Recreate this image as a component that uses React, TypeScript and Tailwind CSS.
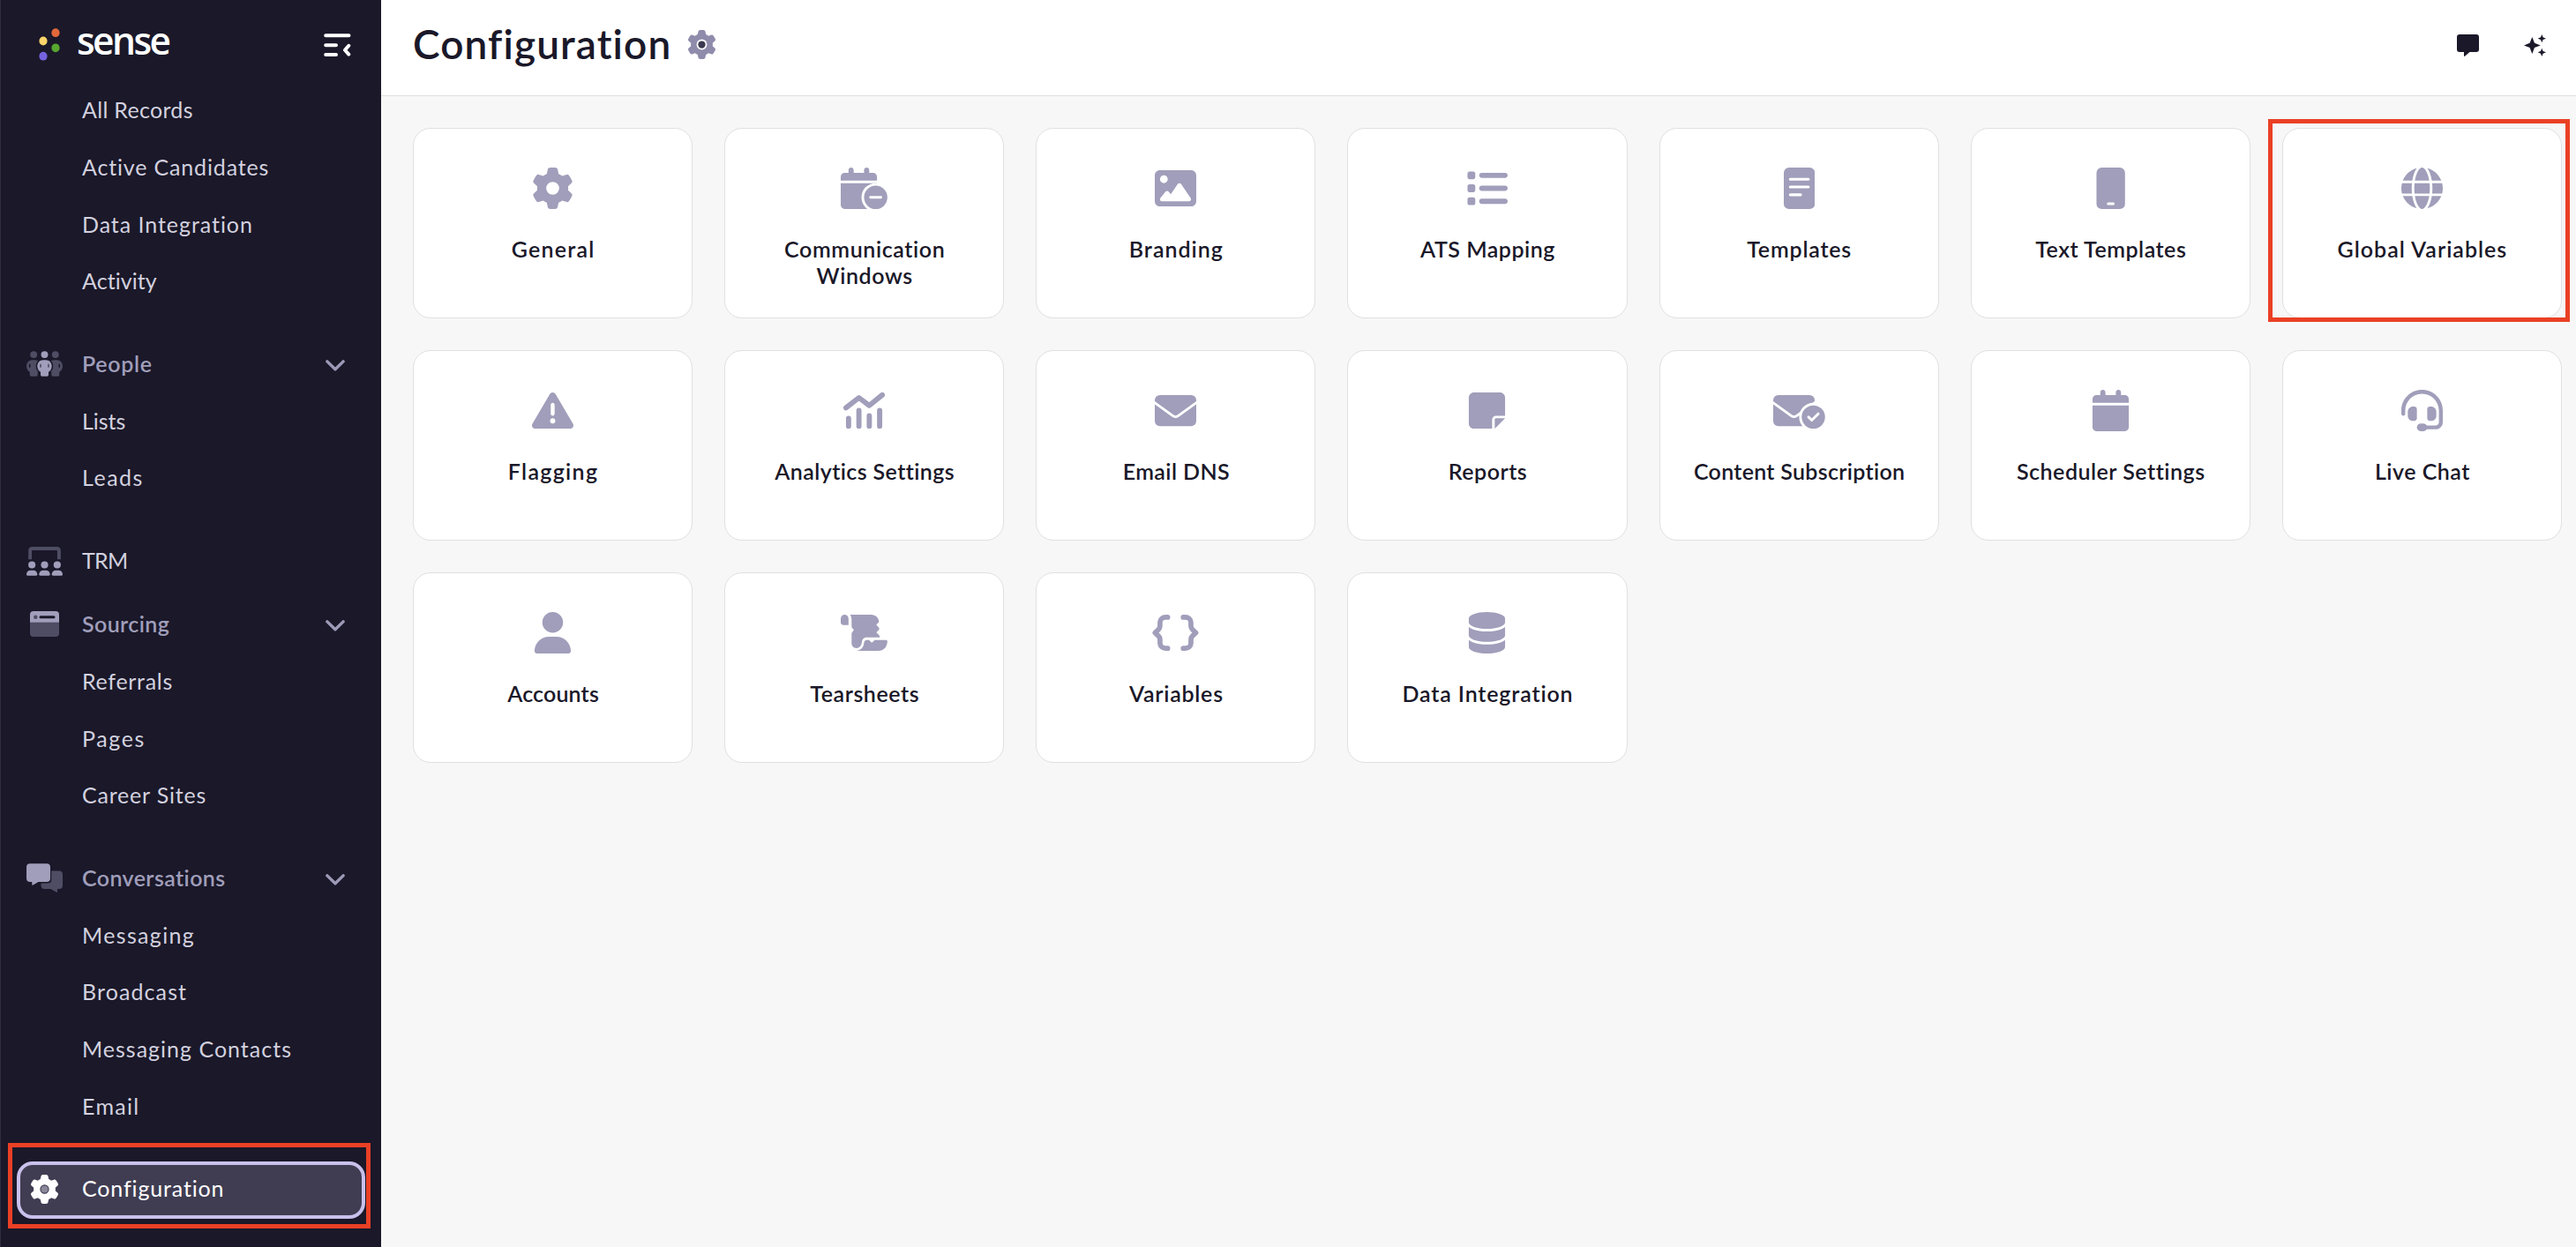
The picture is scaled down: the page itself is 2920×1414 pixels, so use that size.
import type { ReactNode } from "react";
import {
  FaCalendar,
  FaDatabase,
  FaGear,
  FaGlobe,
  FaHeadset,
  FaImage,
  FaList,
  FaNoteSticky,
  FaTriangleExclamation,
  FaUser,
} from "react-icons/fa6";

type NavItem = {
  label: string;
  tracking: string;
};

type Tile = {
  label: string;
  tracking: string;
  icon: ReactNode;
  highlighted?: boolean;
};

const CALENDAR_PATH =
  "M96 32V64H48C21.5 64 0 85.5 0 112v48H448V112c0-26.5-21.5-48-48-48H352V32c0-17.7-14.3-32-32-32s-32 14.3-32 32V64H160V32c0-17.7-14.3-32-32-32S96 14.3 96 32zM448 192H0V464c0 26.5 21.5 48 48 48H400c26.5 0 48-21.5 48-48V192z";

/* ---------- Tile icons ---------- */

function CalendarMinusIcon() {
  return (
    <svg viewBox="0 0 576 512" className="h-[47px]" fill="currentColor">
      <mask id="calendar-cut">
        <rect width="576" height="512" fill="#fff" />
        <circle cx="432" cy="368" r="176" fill="#000" />
      </mask>
      <path d={CALENDAR_PATH} mask="url(#calendar-cut)" />
      <circle cx="432" cy="368" r="144" />
      <rect x="352" y="352" width="160" height="32" rx="16" fill="#fff" />
    </svg>
  );
}

function MemoIcon() {
  return (
    <svg viewBox="0 0 384 512" className="h-[47px]" fill="currentColor">
      <rect width="384" height="512" rx="64" />
      <path
        d="M80 144H304M80 240H304M80 336H208"
        stroke="#fff"
        strokeWidth="34"
        strokeLinecap="round"
      />
    </svg>
  );
}

function MobileIcon() {
  return (
    <svg viewBox="0 0 384 512" className="h-[47px]" fill="currentColor">
      <rect x="16" width="352" height="512" rx="64" />
      <rect x="144" y="430" width="96" height="34" rx="17" fill="#fff" />
    </svg>
  );
}

function ChartIcon() {
  return (
    <svg
      viewBox="0 0 512 512"
      className="h-[47px]"
      fill="none"
      stroke="currentColor"
      strokeWidth="64"
      strokeLinecap="round"
    >
      <path d="M32 222L192 98L320 194L480 64" strokeLinejoin="round" />
      <path d="M64 352V448M192 256V448M320 320V448M448 256V448" />
    </svg>
  );
}

function EnvelopeIcon() {
  return (
    <svg viewBox="0 0 512 512" className="h-[47px]" fill="currentColor">
      <rect y="64" width="512" height="384" rx="64" />
      <path
        d="M-20 147L228 325Q256 342 284 325L532 147"
        fill="none"
        stroke="#fff"
        strokeWidth="32"
      />
    </svg>
  );
}

function EnvelopeCheckIcon() {
  return (
    <svg viewBox="0 0 640 512" className="h-[47px]" fill="currentColor">
      <mask id="envelope-cut">
        <rect width="640" height="512" fill="#fff" />
        <path
          d="M-20 147L228 325Q256 342 284 325L532 147"
          fill="none"
          stroke="#000"
          strokeWidth="32"
        />
        <circle cx="496" cy="336" r="176" fill="#000" />
      </mask>
      <rect y="64" width="512" height="384" rx="64" mask="url(#envelope-cut)" />
      <circle cx="496" cy="336" r="144" />
      <path
        d="M436 336L476 376L556 296"
        fill="none"
        stroke="#fff"
        strokeWidth="32"
        strokeLinecap="round"
        strokeLinejoin="round"
      />
    </svg>
  );
}

function ScrollIcon() {
  return (
    <svg viewBox="0 0 576 512" className="h-[47px]" fill="currentColor">
      <path d="M0 80C0 54 21 32 48 32S96 54 96 80V160H32C14 160 0 146 0 128Z" />
      <path d="M116 32H376C432 32 472 74 472 124L444 150Q438 158 446 166L472 192Q482 205 472 219L446 244Q438 252 446 260L474 286Q484 298 480 314H320C284 314 266 340 262 366C258 412 234 446 196 446C158 446 134 418 134 384V276C134 258 144 242 158 230Q164 222 158 214C142 202 134 190 134 172V96C134 72 128 50 116 32Z" />
      <path d="M194 478C258 468 284 430 288 378C290 358 304 346 322 346H350L376 373Q384 380 392 373L418 346H560Q576 346 576 362C574 430 530 480 464 480H194Z" />
    </svg>
  );
}

function BracesIcon() {
  return (
    <svg
      viewBox="0 0 576 512"
      className="h-[47px]"
      fill="none"
      stroke="currentColor"
      strokeWidth="62"
      strokeLinecap="round"
      strokeLinejoin="round"
    >
      <path d="M192 64H168C128 64 97 93 97 128V172C97 189 90 205 78 216L36 256L78 296C90 307 97 323 97 340V384C97 419 128 448 168 448H192" />
      <path d="M384 64H408C448 64 479 93 479 128V172C479 189 486 205 498 216L540 256L498 296C486 307 479 323 479 340V384C479 419 448 448 408 448H384" />
    </svg>
  );
}

/* ---------- Sidebar icons ---------- */

function PeopleIcon() {
  const body =
    "M16 0H24C33 0 40 7 40 17C40 24 36 30 31 33V41Q31 45 27 45H13Q9 45 9 41V33C4 30 0 24 0 17C0 7 7 0 16 0Z";
  return (
    <svg viewBox="0 0 640 448" className="w-[41px]" fill="#4e4d63">
      <circle cx="128" cy="64" r="62" />
      <circle cx="512" cy="64" r="62" />
      <path d={body} transform="translate(0 160) scale(6.4)" />
      <path d={body} transform="translate(384 160) scale(6.4)" />
      <g fill="#1a1829">
        <ellipse cx="58" cy="262" rx="14" ry="34" />
        <ellipse cx="582" cy="262" rx="14" ry="34" />
        <path d={body} transform="translate(168 142) scale(7.6 7.4)" />
      </g>
      <g fill="#a09eba">
        <circle cx="320" cy="64" r="62" />
        <path d={body} transform="translate(192 160) scale(6.4)" />
      </g>
      <g fill="#4e4d63">
        <ellipse cx="250" cy="262" rx="14" ry="34" />
        <ellipse cx="390" cy="262" rx="14" ry="34" />
      </g>
    </svg>
  );
}

function AudienceIcon() {
  return (
    <svg viewBox="0 0 640 512" className="w-[41px]" fill="#a09eba">
      <path
        d="M64 224V72Q64 32 104 32H536Q576 32 576 72V224"
        fill="none"
        stroke="#4e4d63"
        strokeWidth="62"
      />
      {[96, 320, 544].map((cx) => (
        <g key={cx}>
          <circle cx={cx} cy="320" r="84" fill="#1a1829" />
          <circle cx={cx} cy="320" r="64" />
          <path
            d="M-96 486C-96 446 -66 416 -26 416H26C66 416 96 446 96 486Q96 512 70 512H-70Q-96 512 -96 486Z"
            transform={`translate(${cx})`}
          />
        </g>
      ))}
    </svg>
  );
}

function BrowserIcon() {
  return (
    <svg viewBox="0 0 33 29" className="w-[33px]">
      <path d="M0 12.5H33V25Q33 29 29 29H4Q0 29 0 25Z" fill="#4e4d63" />
      <path d="M4 0H29Q33 0 33 4V12.7H0V4Q0 0 4 0Z" fill="#a09eba" />
      <circle cx="6.3" cy="6.8" r="2.2" fill="#4e4d63" />
      <path d="M12 6.8H27" stroke="#1a1829" strokeWidth="3" strokeLinecap="round" />
    </svg>
  );
}

function ChatsIcon() {
  return (
    <svg viewBox="0 0 41 33" className="w-[41px]">
      <path
        d="M21 8.5H37Q41 8.5 41 12.5V25Q41 29 37 29H35V32Q35 33.4 33.6 32.6L27.5 29H20.5Q16.5 29 16.5 25V17Z"
        fill="#4e4d63"
      />
      <path d="M5 0H24Q28.2 0 28.2 4V19Q28.2 22.5 24 22.5H14L7 26.5V22.5Z" fill="#1a1829" />
      <path
        d="M4 .3H23Q27 .3 27 4.3V17Q27 21 23 21H13.5L7.5 24.6Q6.3 25.2 6.3 24V21H4Q0 21 0 17V4.3Q0 .3 4 .3Z"
        fill="#a09eba"
      />
    </svg>
  );
}

function ChevronDown() {
  return (
    <svg
      viewBox="0 0 22 13"
      className="mt-1 ml-auto mr-[41px] w-[22px]"
      fill="none"
      stroke="#9d9ab8"
      strokeWidth="3.4"
      strokeLinecap="round"
      strokeLinejoin="round"
    >
      <path d="M1.9 1.9L11 10.8L20.1 1.9" />
    </svg>
  );
}

function SidebarCollapseIcon() {
  return (
    <svg
      viewBox="0 0 31 26"
      className="w-[31px]"
      fill="none"
      stroke="#fff"
      strokeWidth="4"
      strokeLinecap="round"
      strokeLinejoin="round"
    >
      <path d="M2.2 2.2H28.5M2.2 13.2H14M2.2 24H14" />
      <path d="M28.3 13.8L24 18.7L28.3 23.6" />
    </svg>
  );
}

function SenseLogo() {
  return (
    <div className="flex items-center">
      <svg viewBox="0 0 24 38" className="w-6">
        <ellipse cx="19" cy="5.2" rx="4.6" ry="4.9" fill="#e2683b" />
        <ellipse cx="5" cy="14.5" rx="4.6" ry="4.9" fill="#fcd46a" />
        <ellipse cx="19" cy="22.3" rx="4.6" ry="4.9" fill="#58a52f" />
        <ellipse cx="5" cy="31.7" rx="4.6" ry="4.9" fill="#7463de" />
      </svg>
      <span className="ml-[19px] -mt-[11px] font-['Open_Sans'] text-[42.5px] leading-[44px] font-semibold tracking-[-2.6px] text-white">
        sense
      </span>
    </div>
  );
}

/* ---------- Sidebar ---------- */

function SubItem({ label, tracking }: NavItem) {
  return (
    <a className={`flex h-[64.7px] items-center pb-[2px] pl-[92px] text-[#d3d1df] ${tracking}`}>
      {label}
    </a>
  );
}

function GroupHeader({ label, tracking, icon }: NavItem & { icon: ReactNode }) {
  return (
    <div className={`flex h-[64.7px] items-center pb-px font-semibold text-[#a09eba] ${tracking}`}>
      <span className="ml-[29px] mr-[22px] flex w-[41px] justify-center">{icon}</span>
      <span className="-mt-px">{label}</span>
      <ChevronDown />
    </div>
  );
}

const records: NavItem[] = [
  { label: "All Records", tracking: "tracking-[0.3px]" },
  { label: "Active Candidates", tracking: "tracking-[0.84px]" },
  { label: "Data Integration", tracking: "tracking-[0.95px]" },
  { label: "Activity", tracking: "tracking-[0.05px]" },
];

const people: NavItem[] = [
  { label: "Lists", tracking: "tracking-[-0.03px]" },
  { label: "Leads", tracking: "tracking-[1.5px]" },
];

const sourcing: NavItem[] = [
  { label: "Referrals", tracking: "tracking-[0.7px]" },
  { label: "Pages", tracking: "tracking-[1.6px]" },
  { label: "Career Sites", tracking: "tracking-[0.8px]" },
];

const conversations: NavItem[] = [
  { label: "Messaging", tracking: "tracking-[1.35px]" },
  { label: "Broadcast", tracking: "tracking-[1.1px]" },
  { label: "Messaging Contacts", tracking: "tracking-[1px]" },
  { label: "Email", tracking: "tracking-[1.3px]" },
];

function Sidebar() {
  return (
    <aside className="h-full w-[432px] shrink-0 border-l border-[#2f2d40] bg-[#1a1829]">
      <div className="flex h-[93px] items-start justify-between pl-[43px] pr-[34px] pt-8">
        <SenseLogo />
        <div className="pt-[6px]">
          <SidebarCollapseIcon />
        </div>
      </div>

      <nav className="text-[25px] leading-[30px]">
        {records.map((item) => (
          <SubItem key={item.label} {...item} />
        ))}

        <div className="mt-[29px]">
          <GroupHeader label="People" tracking="tracking-[0.7px]" icon={<PeopleIcon />} />
          {people.map((item) => (
            <SubItem key={item.label} {...item} />
          ))}
        </div>

        <div className="mt-[29px] flex h-[64.7px] items-center tracking-[-0.7px] text-[#d3d1df]">
          <span className="ml-[29px] mr-[22px] w-[41px]">
            <AudienceIcon />
          </span>
          <span className="-mt-[2px]">TRM</span>
        </div>

        <div className="mt-[7.5px]">
          <GroupHeader label="Sourcing" tracking="tracking-[0.4px]" icon={<BrowserIcon />} />
          {sourcing.map((item) => (
            <SubItem key={item.label} {...item} />
          ))}
        </div>

        <div className="mt-[29px]">
          <GroupHeader label="Conversations" tracking="tracking-[0.4px]" icon={<ChatsIcon />} />
          {conversations.map((item) => (
            <SubItem key={item.label} {...item} />
          ))}
        </div>

        <a className="relative ml-[18px] mt-[29.6px] flex h-[65px] w-[395px] items-center rounded-[18px] border-4 border-[#c9c0ec] bg-[#403d52] pb-[2px] tracking-[0.85px] text-white">
          <svg viewBox="0 0 512 512" className="ml-[11px] mr-[26px] w-[33px] overflow-visible">
            <FaGear size={512} color="#fff" />
            <circle cx="256" cy="256" r="62" fill="#8a8799" />
          </svg>
          <span className="-mt-[3px]">Configuration</span>
          <span className="absolute -left-[14px] -top-[25px] h-[97px] w-[411px] border-[5px] border-[#ea4025]" />
        </a>
      </nav>
    </aside>
  );
}

/* ---------- Main area ---------- */

const tiles: Tile[] = [
  { label: "General", tracking: "tracking-[1.2px]", icon: <FaGear size={47} /> },
  { label: "Communication Windows", tracking: "tracking-[0.6px]", icon: <CalendarMinusIcon /> },
  { label: "Branding", tracking: "tracking-[1px]", icon: <FaImage size={47} /> },
  { label: "ATS Mapping", tracking: "tracking-[0.5px]", icon: <FaList size={47} /> },
  { label: "Templates", tracking: "tracking-[0.8px]", icon: <MemoIcon /> },
  { label: "Text Templates", tracking: "tracking-[0.5px]", icon: <MobileIcon /> },
  { label: "Global Variables", tracking: "tracking-[1px]", icon: <FaGlobe size={47} />, highlighted: true },
  { label: "Flagging", tracking: "tracking-[1.3px]", icon: <FaTriangleExclamation size={47} /> },
  { label: "Analytics Settings", tracking: "tracking-[0.4px]", icon: <ChartIcon /> },
  { label: "Email DNS", tracking: "tracking-[0.4px]", icon: <EnvelopeIcon /> },
  { label: "Reports", tracking: "tracking-[0.5px]", icon: <FaNoteSticky size={47} /> },
  { label: "Content Subscription", tracking: "tracking-[0.3px]", icon: <EnvelopeCheckIcon /> },
  { label: "Scheduler Settings", tracking: "tracking-[0.5px]", icon: <FaCalendar size={47} /> },
  { label: "Live Chat", tracking: "tracking-[0.5px]", icon: <FaHeadset size={47} /> },
  { label: "Accounts", tracking: "tracking-[0.15px]", icon: <FaUser size={47} /> },
  { label: "Tearsheets", tracking: "tracking-[0.55px]", icon: <ScrollIcon /> },
  { label: "Variables", tracking: "tracking-[0.75px]", icon: <BracesIcon /> },
  { label: "Data Integration", tracking: "tracking-[0.85px]", icon: <FaDatabase size={47} /> },
];

function ConfigTile({ label, tracking, icon, highlighted }: Tile) {
  return (
    <div className="relative flex h-[216px] flex-col items-center rounded-[20px] border border-[#e0e0e2] bg-white px-7 pt-11 text-[#a09eba]">
      {icon}
      <p
        className={`mt-[30px] max-w-[250px] pl-px text-center text-[25px] leading-[30px] font-semibold text-[#1a1829] ${tracking}`}
      >
        {label}
      </p>
      {highlighted && (
        <span className="absolute -left-[17px] -top-[11px] h-[230px] w-[342px] border-[5px] border-[#ea4025]" />
      )}
    </div>
  );
}

function Header() {
  return (
    <header className="flex h-[109px] items-center border-b border-[#dfdfe1] bg-white pl-9 pr-[34px] text-[#1a1829]">
      <h1 className="-mt-2 text-[46px] leading-[56px] font-semibold tracking-[1.1px]">
        Configuration
      </h1>
      <svg viewBox="0 0 512 512" className="-mt-[7px] ml-[18px] w-[33px]">
        <FaGear size={512} color="#8e8bab" />
        <circle cx="256" cy="256" r="92" fill="#fff" />
        <circle cx="256" cy="256" r="64" fill="#3b3850" />
      </svg>
      <svg viewBox="0 0 25 25" className="-mt-[5px] ml-auto w-[25px]" fill="currentColor">
        <path d="M3 0H22Q25 0 25 3V17Q25 20 22 20H14.5L9 24.8Q8 25.3 8 24V20H3Q0 20 0 17V3Q0 0 3 0Z" />
      </svg>
      <svg viewBox="0 0 25 25" className="-mt-[5px] ml-[51px] w-[25px]" fill="currentColor">
        <path d="M9.3 3L12 9.7L18.8 12.4L12 15.1L9.3 22L6.6 15.1L0 12.4L6.6 9.7Z" />
        <path d="M20.3 0L21.6 3.3L25 4.7L21.6 6L20.3 9.3L19 6L15.6 4.7L19 3.3Z" />
        <path d="M20.3 15.7L21.6 19L25 20.3L21.6 21.7L20.3 25L19 21.7L15.6 20.3L19 19Z" />
      </svg>
    </header>
  );
}

export default function App() {
  return (
    <div className="flex h-[1414px] w-[2920px] overflow-hidden bg-[#f7f7f7] font-[Lato,sans-serif]">
      <Sidebar />
      <div className="flex-1">
        <Header />
        <main className="grid grid-cols-7 gap-9 pl-9 pr-4 pt-9">
          {tiles.map((tile) => (
            <ConfigTile key={tile.label} {...tile} />
          ))}
        </main>
      </div>
    </div>
  );
}
